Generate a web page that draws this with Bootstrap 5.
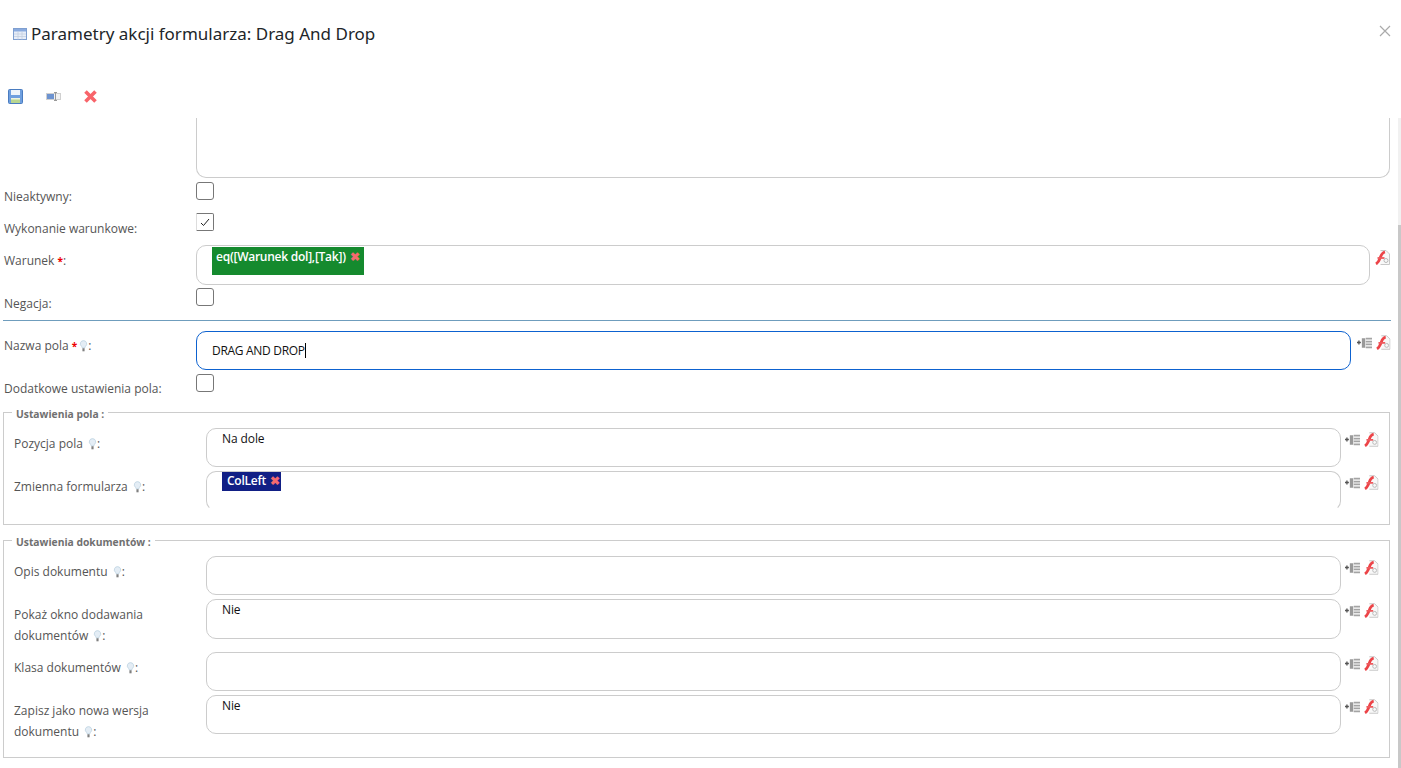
<!DOCTYPE html>
<html lang="pl"><head><meta charset="utf-8">
<link href="https://cdn.jsdelivr.net/npm/bootstrap@5.3.0/dist/css/bootstrap.min.css" rel="stylesheet">
<style>
html,body{height:100%;overflow:hidden;background:#fff}
body{font-family:"Open Sans","Noto Sans",sans-serif;font-size:12px;color:#555}
.dlg-head{height:67px;padding:22px 10px 0 13px}
.dlg-title{font-family:"Noto Sans",sans-serif;font-size:17px;line-height:24px;margin:0;color:#212529;font-weight:400}
.dlg-close{width:12px;height:12px;margin-top:3px}
.tool-row{height:51px;padding:22px 0 0 8px;gap:23px}
.scroller{height:650px;overflow:hidden;position:relative;padding:0 10px 0 3px}
.track{position:absolute;right:0;top:0;bottom:0;width:3px;background:#f1f1f1}
.thumb{position:absolute;right:0;top:107px;bottom:0;width:3px;background:#c8c8c8}
.area-cut{margin:0 1px 0 193px;height:60px;border:1px solid #ccc;border-top:0;border-radius:0 0 10px 10px}
.ln{display:flex}
.lab{width:193px;flex:none;line-height:21px;color:#555;padding:5px 0 0 1px}
.lab-up{padding-top:4px}
.lab2{width:192px;flex:none;line-height:21px;color:#555;padding-top:5px}
.chk{width:18px;height:18px;border:1px solid #777;border-radius:3px;display:block;background:#fff}
.chk-on{border-left-color:#ddd;border-radius:0 2px 2px 0}
.fld{border:1px solid #ccc;border-radius:10px;height:40px;flex:1 1 auto;color:#111;padding:1px 0 0 15px;line-height:18px;letter-spacing:-.1px}
.fld-s{height:39px}
.fld-open{border-bottom-color:transparent;padding-top:0}
.fld-on{border-color:#0d62d0;line-height:37px;height:39px;padding-top:0;letter-spacing:-.3px;margin-right:2px}
.car{display:inline-block;width:1px;height:15px;background:#000;vertical-align:-3px}
.tag{display:inline-block;color:#fff;font-weight:600;line-height:17px;letter-spacing:-.25px}
.tag-g{background:#158a2e;height:28px;padding:1px 4px 0 4px}
.tag-b{background:#111f85;height:19px;padding:0 1px 0 5px;margin-top:-1px}
.ic-x{color:#f46a6e;font-weight:700;font-size:12px;letter-spacing:0;margin-left:1px}
.side{flex:none;display:flex;align-items:center;gap:4px;padding:4px 0 0 4px;width:38px;height:19px}
.side-one{width:21px;padding:5px 0 0 5px;height:20px}
.req{color:#e00;font-weight:700;font-size:10px}
.rule{height:1px;background:#6f9dbd}
.fset{border:1px solid #ccc;position:relative;padding:0 10px;margin-right:1px}
.fset-t{position:absolute;left:8px;top:-6px;background:#fff;padding:0 4px;font-size:10.300px;line-height:14px;font-weight:700;color:#707070}
.bulb{margin-left:2px;vertical-align:-2px}
</style></head><body>
<svg width="0" height="0" class="position-absolute"><defs>
<symbol id="bulb" viewBox="0 0 10 13"><path d="M5 .5a3.600 3.600 0 0 0-2.200 6.400c.5.500.7 1 .8 1.800h2.800c.1-.8.3-1.300.8-1.800A3.600 3.600 0 0 0 5 .5z" fill="#e4edf5" stroke="#b7cede" stroke-width=".8"/><rect x="3.800" y="9" width="2.400" height="3.400" fill="#808080"/></symbol>
<symbol id="pdf" viewBox="0 0 15 15"><path d="M5.500 .5h5.500l3.500 3.500v10.500h-9" fill="#f8f8f8" stroke="#c8c8c8"/><path d="M1 14c2.500-1.500 3.300-3.500 4.300-6.500S7.500 2.500 10 2" fill="none" stroke="#ec4448" stroke-width="2.800"/><path d="M2.500 8h7" stroke="#ee5a5e" stroke-width="1.800"/><circle cx="11" cy="10.500" r="2" fill="none" stroke="#b8b8b8"/></symbol>
<symbol id="tree" viewBox="0 0 16 12"><path d="M0 5.500h4M2 3.500v4" stroke="#555" stroke-width="1.400"/><path d="M5 1h3.500v10H5z" fill="#999"/><path d="M9 1.500h7M9 4.500h7M9 7.500h7M9 10.500h7" stroke="#a4a4a4" stroke-width="1.800"/></symbol>
</defs></svg>

<header class="dlg-head d-flex justify-content-between align-items-start">
<h5 class="dlg-title d-flex align-items-center gap-1">
<svg width="14" height="12" viewBox="0 0 14 12"><rect x=".5" y=".5" width="13" height="11" fill="#e8eef8" stroke="#7f9fd0"/><rect x="1" y="1" width="12" height="2.500" fill="#8aabdf"/><path d="M1 6h12M1 8.500h12M5 3.500v8M9 3.500v8" stroke="#c4cfe0" stroke-width=".8"/></svg>
Parametry akcji formularza: Drag And Drop</h5>
<svg class="dlg-close" viewBox="0 0 12 12"><path d="M1 1l10 10M11 1L1 11" stroke="#aaa" stroke-width="1.200"/></svg>
</header>
<div class="tool-row d-flex align-items-start">
<svg width="15" height="15" viewBox="0 0 15 15"><rect x=".5" y=".5" width="14" height="14" rx="1" fill="#6f9fdf" stroke="#4a7cc0"/><rect x="3" y="1" width="9" height="5" fill="#eef4fb"/><rect x="3" y="9" width="9" height="5" fill="#b9d690"/><rect x="3" y="9" width="9" height="1.500" fill="#eef3e0"/></svg>
<svg width="15" height="15" viewBox="0 0 15 15"><rect x=".5" y="4.500" width="14" height="6" fill="#f2f2f2" stroke="#d0d0d0"/><rect x="1" y="5" width="7" height="5" fill="#6d93d0"/><path d="M9.500 3.500v8M8 3.500h3M8 11.500h3" stroke="#999"/></svg>
<svg width="15" height="15" viewBox="1 0 15 15"><path d="M2.500 2.500l10 10M12.500 2.500l-10 10" stroke="#f8646a" stroke-width="3.600"/></svg>
</div>
<div class="scroller">
<div class="track"></div><div class="thumb"></div>
<div class="area-cut"></div>
<div class="ln" style="margin-top:4px;height:31px"><label class="lab lab-up">Nieaktywny:</label><span class="chk"></span></div>
<div class="ln" style="height:32px"><label class="lab">Wykonanie warunkowe:</label><span class="chk chk-on"><svg class="d-block" width="16" height="16" viewBox="0 0 16 16"><path d="M4 9l2.500 2.500L12 5" fill="none" stroke="#222" stroke-width="1"/></svg></span></div>
<div class="ln" style="height:43px"><label class="lab">Warunek <span class="req">*</span>:</label><div class="fld"><span class="tag tag-g">eq([Warunek dol],[Tak]) <span class="ic-x">✖</span></span></div><div class="side side-one"><svg width="15" height="15"><use href="#pdf"/></svg></div></div>
<div class="ln" style="height:32px"><label class="lab">Negacja:</label><span class="chk"></span></div>
<div class="rule"></div>
<div class="ln" style="margin-top:10px;height:43px"><label class="lab lab-up">Nazwa pola <span class="req">*</span><svg class="bulb" width="9" height="12"><use href="#bulb"/></svg>:</label><div class="fld fld-on">DRAG AND DROP<span class="car"></span></div><div class="side"><svg width="16" height="12"><use href="#tree"/></svg><svg width="15" height="15"><use href="#pdf"/></svg></div></div>
<div class="ln" style="height:38px"><label class="lab lab-up">Dodatkowe ustawienia pola:</label><span class="chk"></span></div>

<section class="fset" style="height:113px">
<span class="fset-t">Ustawienia pola :</span>
<div class="ln" style="margin-top:15px;height:43px"><label class="lab2">Pozycja pola <svg class="bulb" width="9" height="12"><use href="#bulb"/></svg>:</label><div class="fld fld-s">Na dole</div><div class="side"><svg width="16" height="12"><use href="#tree"/></svg><svg width="15" height="15"><use href="#pdf"/></svg></div></div>
<div class="ln" style="height:40px"><label class="lab2">Zmienna formularza <svg class="bulb" width="9" height="12"><use href="#bulb"/></svg>:</label><div class="fld fld-open"><span class="tag tag-b">ColLeft <span class="ic-x">✖</span></span></div><div class="side"><svg width="16" height="12"><use href="#tree"/></svg><svg width="15" height="15"><use href="#pdf"/></svg></div></div>
</section>

<section class="fset" style="height:218px;margin-top:15px">
<span class="fset-t">Ustawienia dokumentów :</span>
<div class="ln" style="margin-top:15px;height:43px"><label class="lab2">Opis dokumentu <svg class="bulb" width="9" height="12"><use href="#bulb"/></svg>:</label><div class="fld fld-s"></div><div class="side"><svg width="16" height="12"><use href="#tree"/></svg><svg width="15" height="15"><use href="#pdf"/></svg></div></div>
<div class="ln" style="height:53px"><label class="lab2">Pokaż okno dodawania<br>dokumentów <svg class="bulb" width="9" height="12"><use href="#bulb"/></svg>:</label><div class="fld">Nie</div><div class="side"><svg width="16" height="12"><use href="#tree"/></svg><svg width="15" height="15"><use href="#pdf"/></svg></div></div>
<div class="ln" style="height:43px"><label class="lab2">Klasa dokumentów <svg class="bulb" width="9" height="12"><use href="#bulb"/></svg>:</label><div class="fld fld-s"></div><div class="side"><svg width="16" height="12"><use href="#tree"/></svg><svg width="15" height="15"><use href="#pdf"/></svg></div></div>
<div class="ln" style="height:43px"><label class="lab2">Zapisz jako nowa wersja<br>dokumentu <svg class="bulb" width="9" height="12"><use href="#bulb"/></svg>:</label><div class="fld fld-s">Nie</div><div class="side"><svg width="16" height="12"><use href="#tree"/></svg><svg width="15" height="15"><use href="#pdf"/></svg></div></div>
</section>
</div>
</body></html>
